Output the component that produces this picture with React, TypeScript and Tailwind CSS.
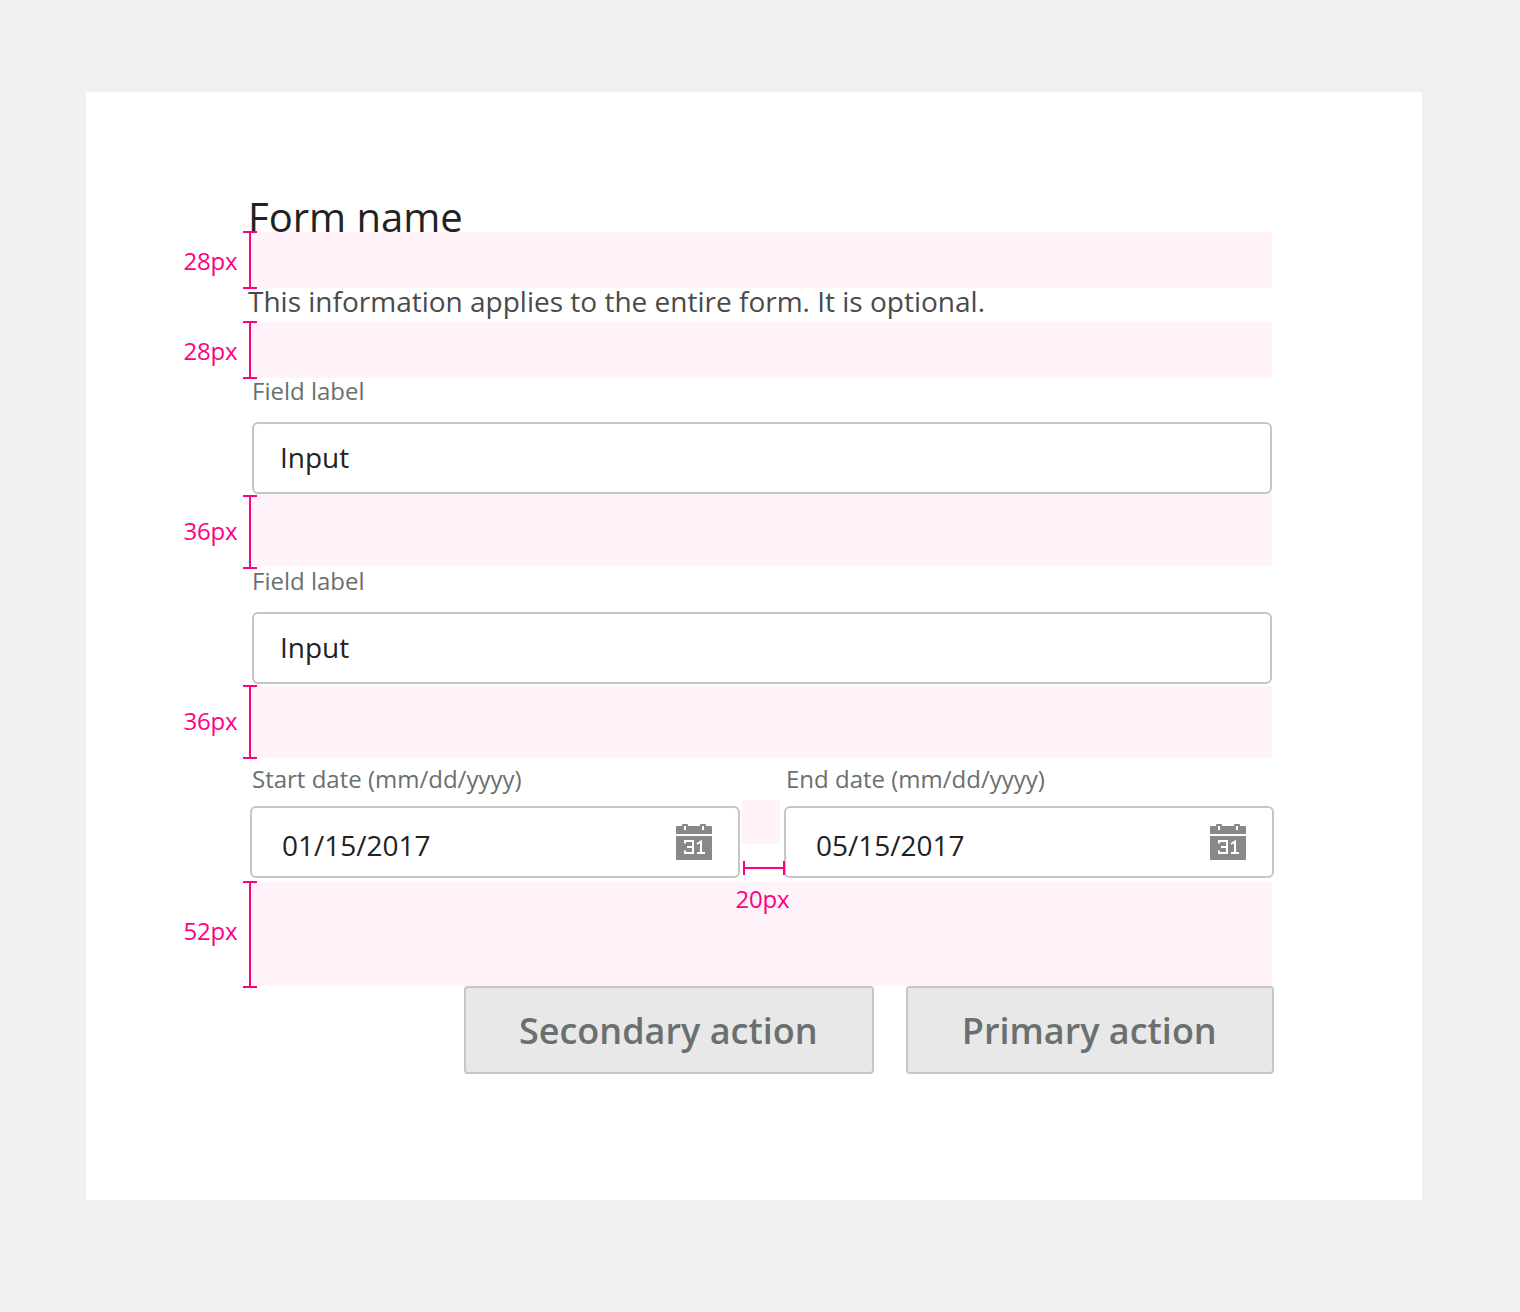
import type { ReactNode } from "react";

type GapProps = {
  label: string;
  /** Height of the shaded band. */
  band: string;
  /** Offset and height of the bracket beside the band. */
  bracket: string;
  /** Vertical offset of the measurement text. */
  text: string;
};

function Gap({ label, band, bracket, text }: GapProps) {
  return (
    <div className={`relative mr-0.5 bg-[#fff2f9] ${band}`}>
      <span
        className={`absolute right-full mr-[12.75px] text-2xl leading-6 tracking-[-0.01em] text-[#ff0084] ${text}`}
      >
        {label}
      </span>
      <div
        className={`absolute -left-[7px] flex w-3.5 justify-center border-y-2 border-[#ff0084] ${bracket}`}
      >
        <div className="w-0.5 bg-[#ff0084]" />
      </div>
    </div>
  );
}

function TextField({ label, value, pad }: { label: string; value: string; pad: string }) {
  return (
    <div className={`mr-0.5 ml-0.5 flex flex-col ${pad}`}>
      <label className="h-11 text-2xl leading-[26px] text-[#6a706f]">{label}</label>
      <div className="flex h-[72px] items-center rounded-md border-2 border-[#c6c6c6] px-[26px] text-[28px] leading-[38px] text-[#222222]">
        <span className="-mt-0.5">{value}</span>
      </div>
    </div>
  );
}

function CalendarIcon() {
  return (
    <svg width="36" height="36" viewBox="0 0 36 36" aria-hidden="true">
      <path
        fill="#888888"
        fillRule="evenodd"
        d="M1 2H6V1Q6 0 7 0H11Q12 0 12 1V2H24V1Q24 0 25 0H29Q30 0 30 1V2H35Q36 2 36 3V10H0V3Q0 2 1 2ZM8 2V6H10V2ZM26 2V6H28V2Z"
      />
      <path fill="#888888" d="M0 12H36V35Q36 36 35 36H1Q0 36 0 35Z" />
      <path
        fill="none"
        stroke="#ffffff"
        strokeWidth="2"
        d="M9 19.5V17H17V29H9V26.5M11 23H17M21 20L25 17.5V29M21 29H29"
      />
    </svg>
  );
}

function DateField({ label, value, children }: { label: string; value: string; children?: ReactNode }) {
  return (
    <div className="relative flex w-[490px] flex-col">
      <label className="ml-0.5 h-10 text-2xl leading-[26px] text-[#6a706f]">{label}</label>
      <div className="flex h-[72px] items-center justify-between rounded-md border-2 border-[#c6c6c6] pr-[26px] pl-[30px] text-[28px] leading-[38px] text-[#222222]">
        <span className="mt-[5px]">{value}</span>
        <CalendarIcon />
      </div>
      {children}
    </div>
  );
}

function ActionButton({ width, children }: { width: string; children: ReactNode }) {
  return (
    <button
      type="button"
      className={`h-[88px] rounded border-2 border-[#c6c6c6] bg-[#e8e8e8] pt-0.5 pr-[1.5px] text-center text-4xl leading-[48px] font-semibold text-[#6a706f] ${width}`}
    >
      {children}
    </button>
  );
}

export default function App() {
  return (
    <div className="h-[1312px] w-[1520px] bg-[#f0f0f0] pt-[92px] pl-[86px] font-['Open_Sans',sans-serif]">
      <main className="h-[1108px] w-[1336px] bg-white pt-24 pr-[148px] pl-[164px]">
        <h1 className="-ml-0.5 h-11 text-[40px] leading-[58px] text-[#222222]">Form name</h1>
        <Gap label="28px" band="h-14" bracket="-top-px h-[58px]" text="top-[17px]" />
        <p className="-ml-0.5 h-[34px] text-[28px] leading-[26px] whitespace-nowrap text-[#4a4a4a]">
          This information applies to the entire form. It is optional.
        </p>
        <Gap label="28px" band="h-14" bracket="-top-px h-[58px]" text="top-[17px]" />
        <TextField label="Field label" value="Input" pad="" />
        <Gap label="36px" band="h-[72px]" bracket="top-px h-[74px]" text="top-[25px]" />
        <TextField label="Field label" value="Input" pad="pt-0.5 pb-0.5" />
        <Gap label="36px" band="h-[72px]" bracket="-top-px h-[74px]" text="top-[23px]" />
        <div className="flex justify-between pt-2 pb-1">
          <DateField label="Start date (mm/dd/yyyy)" value="01/15/2017">
            <div className="absolute top-[34px] left-[492px] h-11 w-[38px] bg-[#fff2f9]" />
            <div className="absolute top-[95px] left-[493px] z-10 flex h-3.5 w-[42px] items-center border-x-2 border-[#ff0084]">
              <div className="h-0.5 w-full bg-[#ff0084]" />
            </div>
            <span className="absolute top-[121px] left-[485.5px] z-10 text-2xl leading-6 tracking-[-0.01em] text-[#ff0084]">
              20px
            </span>
          </DateField>
          <DateField label="End date (mm/dd/yyyy)" value="05/15/2017" />
        </div>
        <Gap label="52px" band="h-[104px]" bracket="-top-px h-[107px]" text="top-[37px]" />
        <div className="flex justify-end gap-8">
          <ActionButton width="w-[410px]">Secondary action</ActionButton>
          <ActionButton width="w-[368px]">Primary action</ActionButton>
        </div>
      </main>
    </div>
  );
}
